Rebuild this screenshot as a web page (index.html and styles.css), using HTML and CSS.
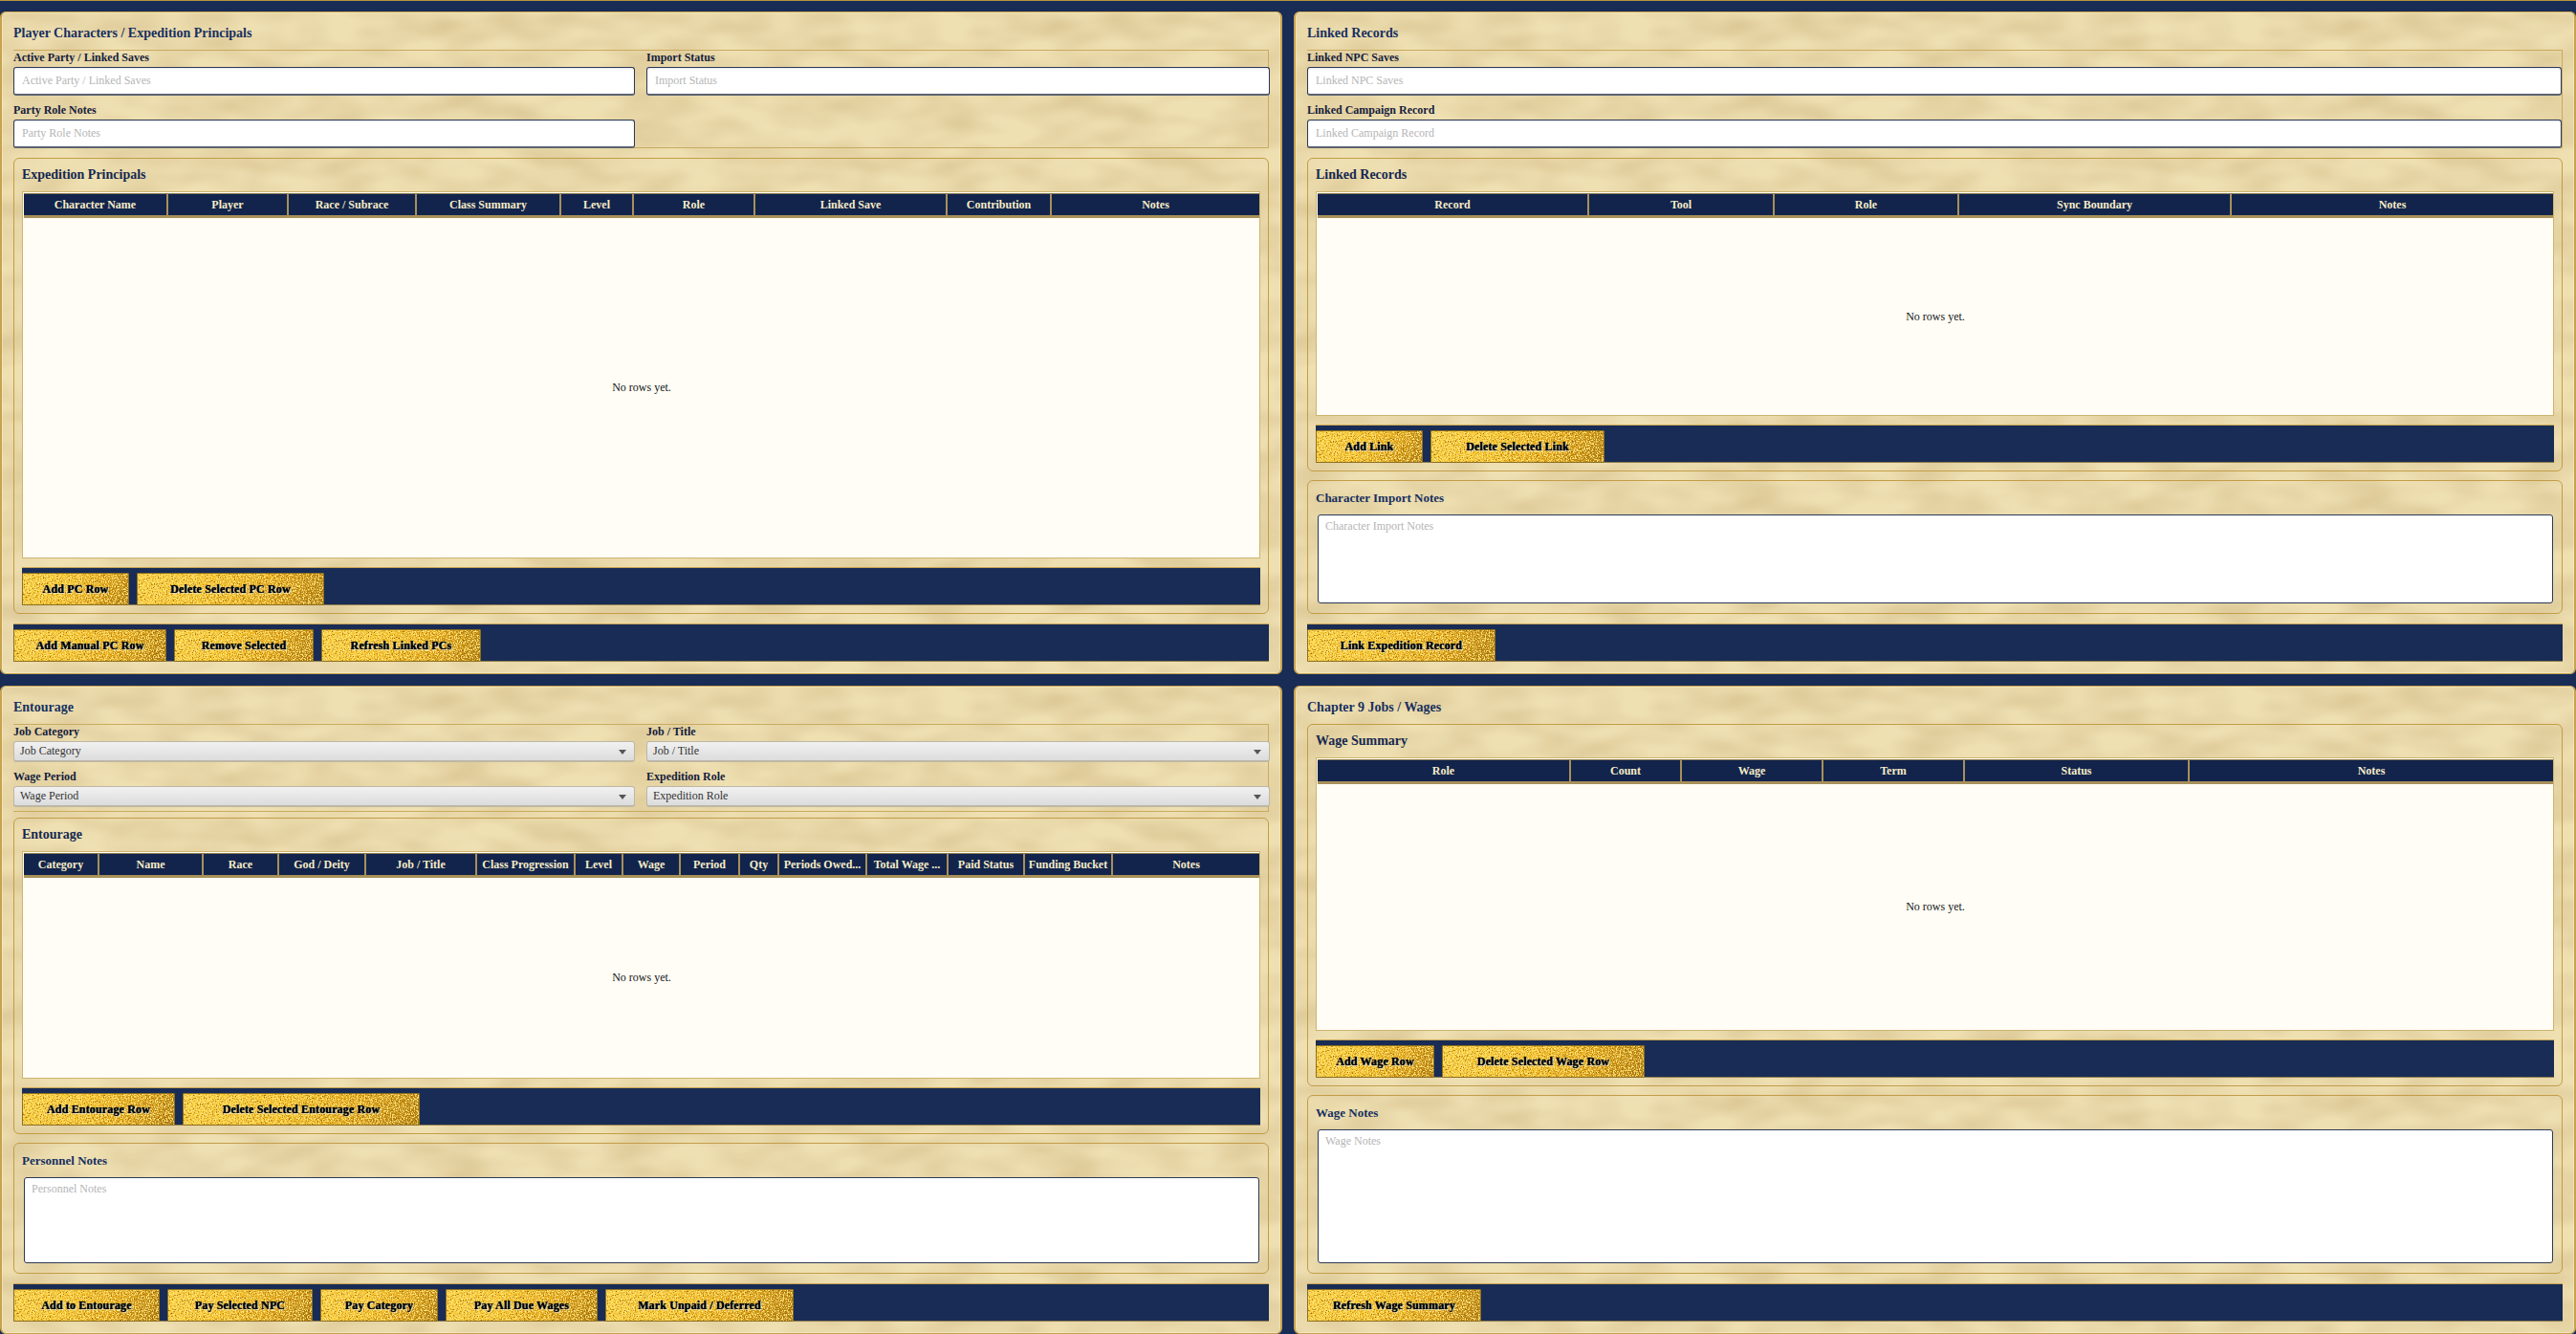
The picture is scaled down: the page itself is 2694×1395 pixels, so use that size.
FILE: index.html
```html
<!DOCTYPE html>
<html lang="en">
<head>
    <meta charset="UTF-8">
    <title>Expedition Records</title>
    <link rel="stylesheet" href="styles.css">
</head>
<body>
    <div class="board">
        <!-- Player characters -->
        <section class="panel">
            <h2 class="panel-title">Player Characters / Expedition Principals</h2>
            <div class="fields">
                <label class="field"><span>Active Party / Linked Saves</span><input type="text" placeholder="Active Party / Linked Saves"></label>
                <label class="field"><span>Import Status</span><input type="text" placeholder="Import Status"></label>
                <label class="field"><span>Party Role Notes</span><input type="text" placeholder="Party Role Notes"></label>
            </div>
            <div class="group grow">
                <h3 class="group-title">Expedition Principals</h3>
                <div class="table">
                    <div class="thead cols-pc">
                        <div>Character Name</div><div>Player</div><div>Race / Subrace</div><div>Class Summary</div><div>Level</div><div>Role</div><div>Linked Save</div><div>Contribution</div><div>Notes</div>
                    </div>
                    <div class="empty">No rows yet.</div>
                </div>
                <div class="actions inner">
                    <button class="btn w-112">Add PC Row</button>
                    <button class="btn w-196">Delete Selected PC Row</button>
                </div>
            </div>
            <div class="actions">
                <button class="btn w-160">Add Manual PC Row</button>
                <button class="btn w-146">Remove Selected</button>
                <button class="btn w-167">Refresh Linked PCs</button>
            </div>
        </section>

        <!-- Linked records -->
        <section class="panel">
            <h2 class="panel-title">Linked Records</h2>
            <div class="fields single">
                <label class="field"><span>Linked NPC Saves</span><input type="text" placeholder="Linked NPC Saves"></label>
                <label class="field"><span>Linked Campaign Record</span><input type="text" placeholder="Linked Campaign Record"></label>
            </div>
            <div class="group grow">
                <h3 class="group-title">Linked Records</h3>
                <div class="table">
                    <div class="thead cols-link">
                        <div>Record</div><div>Tool</div><div>Role</div><div>Sync Boundary</div><div>Notes</div>
                    </div>
                    <div class="empty">No rows yet.</div>
                </div>
                <div class="actions inner">
                    <button class="btn w-112">Add Link</button>
                    <button class="btn w-182">Delete Selected Link</button>
                </div>
            </div>
            <div class="group notes-short">
                <h3 class="group-title notes-title">Character Import Notes</h3>
                <textarea placeholder="Character Import Notes"></textarea>
            </div>
            <div class="actions">
                <button class="btn w-197">Link Expedition Record</button>
            </div>
        </section>

        <!-- Entourage -->
        <section class="panel">
            <h2 class="panel-title">Entourage</h2>
            <div class="fields selects">
                <label class="field"><span>Job Category</span><div class="select">Job Category</div></label>
                <label class="field"><span>Job / Title</span><div class="select">Job / Title</div></label>
                <label class="field"><span>Wage Period</span><div class="select">Wage Period</div></label>
                <label class="field"><span>Expedition Role</span><div class="select">Expedition Role</div></label>
            </div>
            <div class="group grow">
                <h3 class="group-title">Entourage</h3>
                <div class="table">
                    <div class="thead cols-ent">
                        <div>Category</div><div>Name</div><div>Race</div><div>God / Deity</div><div>Job / Title</div><div>Class Progression</div><div>Level</div><div>Wage</div><div>Period</div><div>Qty</div><div>Periods Owed...</div><div>Total Wage ...</div><div>Paid Status</div><div>Funding Bucket</div><div>Notes</div>
                    </div>
                    <div class="empty">No rows yet.</div>
                </div>
                <div class="actions inner">
                    <button class="btn w-160">Add Entourage Row</button>
                    <button class="btn w-248">Delete Selected Entourage Row</button>
                </div>
            </div>
            <div class="group notes-mid">
                <h3 class="group-title notes-title">Personnel Notes</h3>
                <textarea placeholder="Personnel Notes"></textarea>
            </div>
            <div class="actions">
                <button class="btn w-153">Add to Entourage</button>
                <button class="btn w-152">Pay Selected NPC</button>
                <button class="btn w-123">Pay Category</button>
                <button class="btn w-159">Pay All Due Wages</button>
                <button class="btn w-197">Mark Unpaid / Deferred</button>
            </div>
        </section>

        <!-- Chapter 9 wages -->
        <section class="panel">
            <h2 class="panel-title">Chapter 9 Jobs / Wages</h2>
            <div class="group grow">
                <h3 class="group-title">Wage Summary</h3>
                <div class="table">
                    <div class="thead cols-wage">
                        <div>Role</div><div>Count</div><div>Wage</div><div>Term</div><div>Status</div><div>Notes</div>
                    </div>
                    <div class="empty">No rows yet.</div>
                </div>
                <div class="actions inner">
                    <button class="btn w-124">Add Wage Row</button>
                    <button class="btn w-212">Delete Selected Wage Row</button>
                </div>
            </div>
            <div class="group notes-tall">
                <h3 class="group-title notes-title">Wage Notes</h3>
                <textarea placeholder="Wage Notes"></textarea>
            </div>
            <div class="actions">
                <button class="btn w-182">Refresh Wage Summary</button>
            </div>
        </section>
    </div>
</body>
</html>
```

FILE: styles.css
```css
* {
    box-sizing: border-box;
}
html, body {
    height: 100%;
}
body {
    margin: 0;
    background-color: #182c55;
    font-family: "Liberation Serif", "Times New Roman", serif;
    color: #14151a;
    overflow: hidden;
}
.board {
    height: 100vh;
    padding-top: 11px;
    border-top: 1px solid #b8963e;
    display: grid;
    grid-template-columns: 1341px 1341px;
    grid-template-rows: 693px 678px;
    column-gap: 12px;
    row-gap: 12px;
}
.panel {
    display: flex;
    flex-direction: column;
    padding: 12px;
    border-style: solid;
    border-color: #c6a350;
    border-width: 1px 2px;
    border-radius: 6px;
    background-color: #efe0b2;
    box-shadow: inset 0 0 0 1px rgba(255, 248, 215, 0.35);
    /* parchment blotches */
    background-image: url("data:image/svg+xml,%3Csvg xmlns='http://www.w3.org/2000/svg' width='640' height='420'%3E%3Cfilter id='p' x='0' y='0' width='100%25' height='100%25' color-interpolation-filters='sRGB'%3E%3CfeTurbulence type='fractalNoise' baseFrequency='.015 .036' numOctaves='2' seed='7' stitchTiles='stitch'/%3E%3CfeColorMatrix values='0 0 0 0 .72 0 0 0 0 .6 0 0 0 0 .38 .62 0 0 0 -.2'/%3E%3C/filter%3E%3Crect width='640' height='420' filter='url(%23p)'/%3E%3C/svg%3E");
    background-size: 640px 420px;
}
.panel-title {
    margin: 0;
    height: 27px;
    font-size: 14px;
    line-height: 20px;
    font-weight: bold;
    color: #17305f;
}
.fields {
    display: grid;
    grid-template-columns: 650px 652px;
    column-gap: 12px;
    row-gap: 0;
    height: 103px;
    margin-bottom: 10px;
    border-top: 1px solid #c9aa5e;
    border-bottom: 1px solid #c9aa5e;
    border-right: 1px solid #c9aa5e;
}
.fields.single {
    grid-template-columns: 1fr;
}
.fields.selects {
    height: 92px;
    margin-bottom: 6px;
}
.field {
    display: flex;
    flex-direction: column;
    height: 55px;
}
.selects .field {
    height: 47px;
}
.field span {
    height: 17px;
    font-size: 12px;
    line-height: 14px;
    font-weight: bold;
    color: #14203c;
}
input[type=text] {
    width: 100%;
    height: 30px;
    padding: 0 8px;
    border: 1px solid #2a3a58;
    border-bottom: 2px solid #5a6270;
    border-radius: 3px;
    background-color: #fff;
    box-shadow: inset 0 1px 2px rgba(40, 40, 70, 0.12);
    font-family: inherit;
    font-size: 12px;
}
input::placeholder, textarea::placeholder {
    color: #b5b5b5;
    opacity: 1;
}
.select {
    position: relative;
    height: 22px;
    padding: 0 6px;
    border: 1px solid #bdb7a6;
    border-bottom-width: 2px;
    border-radius: 3px;
    background: linear-gradient(#f1f1f1, #dcdcdc);
    font-size: 12px;
    line-height: 19px;
    color: #333;
}
/* dropdown arrow */
.select::after {
    content: "";
    position: absolute;
    top: 8px;
    right: 8px;
    border-left: 4px solid transparent;
    border-right: 4px solid transparent;
    border-top: 5px solid #555;
}
.group {
    display: flex;
    flex-direction: column;
    padding: 8px;
    border: 1px solid #c29d48;
    border-radius: 6px;
}
.grow {
    flex: 1;
    min-height: 0;
}
.group-title {
    margin: 0;
    height: 26px;
    font-size: 14px;
    line-height: 18px;
    font-weight: bold;
    color: #14284f;
}
.notes-title {
    font-size: 13px;
    height: 27px;
    padding-top: 1px;
    color: #17305f;
}
.notes-short {
    flex: none;
    height: 140px;
    margin-top: 9px;
}
.notes-mid {
    flex: none;
    height: 137px;
    margin-top: 9px;
}
.notes-tall {
    flex: none;
    height: 187px;
    margin-top: 9px;
}
textarea {
    flex: 1;
    display: block;
    width: auto;
    margin: 0 1px 2px 2px;
    padding: 4px 7px;
    border: 1px solid #2a3a58;
    border-radius: 3px;
    background-color: #fff;
    font-family: inherit;
    font-size: 12px;
    resize: none;
}
.table {
    flex: 1;
    display: flex;
    flex-direction: column;
    min-height: 0;
    border: 1px solid #cdb46e;
    background-color: #fffdf5;
    padding: 1px 0 0 1px;
}
.thead {
    display: grid;
    height: 26px;
    border-top: 1px solid #8a7a50;
    border-bottom: 3px solid #a8905a;
    background-color: #12244c;
    color: #f6ecc8;
    font-size: 12px;
    font-weight: bold;
}
.thead div {
    display: flex;
    align-items: center;
    justify-content: center;
    white-space: nowrap;
    overflow: hidden;
    border-right: 2px solid #a8905a;
}
.thead div:last-child {
    border-right: none;
}
.cols-pc {
    grid-template-columns: 151px 126px 134px 151px 76px 127px 201px 109px 1fr;
}
.cols-link {
    grid-template-columns: 284px 194px 193px 285px 1fr;
}
.cols-wage {
    grid-template-columns: 265px 116px 148px 148px 235px 1fr;
}
.cols-ent {
    grid-template-columns: 79px 109px 79px 91px 116px 103px 50px 60px 62px 41px 92px 85px 80px 92px 1fr;
}
.empty {
    flex: 1;
    display: flex;
    align-items: center;
    justify-content: center;
    font-size: 12px;
    color: #14151a;
}
.actions {
    flex: none;
    display: flex;
    gap: 8px;
    height: 40px;
    margin-top: 10px;
    padding-top: 5px;
    border-top: 1px solid #c6a350;
    border-bottom: 1px solid #8f7c4e;
    background-color: #182c55;
}
.actions.inner {
    margin-top: 9px;
}
.btn {
    height: 34px;
    padding: 0;
    border: 1px solid #8d6f1f;
    border-radius: 1px;
    background-color: #e0a818;
    /* gold leaf: light and dark speckle over a diagonal shine */
    background-image: url("data:image/svg+xml,%3Csvg xmlns='http://www.w3.org/2000/svg' width='300' height='60'%3E%3Cfilter id='g' x='0' y='0' width='100%25' height='100%25' color-interpolation-filters='sRGB'%3E%3CfeTurbulence type='fractalNoise' baseFrequency='.75' numOctaves='2' seed='3' stitchTiles='stitch'/%3E%3CfeColorMatrix values='0 0 0 0 1 0 0 0 0 .9 0 0 0 0 .5 4.5 0 0 0 -2'/%3E%3C/filter%3E%3Cfilter id='d' x='0' y='0' width='100%25' height='100%25' color-interpolation-filters='sRGB'%3E%3CfeTurbulence type='fractalNoise' baseFrequency='.7' numOctaves='2' seed='11' stitchTiles='stitch'/%3E%3CfeColorMatrix values='0 0 0 0 .62 0 0 0 0 .4 0 0 0 0 .02 4 0 0 0 -2.05'/%3E%3C/filter%3E%3Crect width='300' height='60' filter='url(%23d)'/%3E%3Crect width='300' height='60' filter='url(%23g)'/%3E%3C/svg%3E"), linear-gradient(120deg, #fbd03c 0%, #f6c022 40%, #e0a212 70%, #a87406 100%);
    font-family: inherit;
    font-size: 12px;
    font-weight: bold;
    letter-spacing: 0.15px;
    color: #000;
    text-shadow: 0 0 1px #000, 1px 1px 1px rgba(255, 255, 255, 0.85), -1px 0 1px rgba(255, 255, 255, 0.5);
}
.w-112 { width: 112px; }
.w-123 { width: 123px; }
.w-124 { width: 124px; }
.w-146 { width: 146px; }
.w-152 { width: 152px; }
.w-153 { width: 153px; }
.w-159 { width: 159px; }
.w-160 { width: 160px; }
.w-167 { width: 167px; }
.w-182 { width: 182px; }
.w-196 { width: 196px; }
.w-197 { width: 197px; }
.w-212 { width: 212px; }
.w-248 { width: 248px; }
```
